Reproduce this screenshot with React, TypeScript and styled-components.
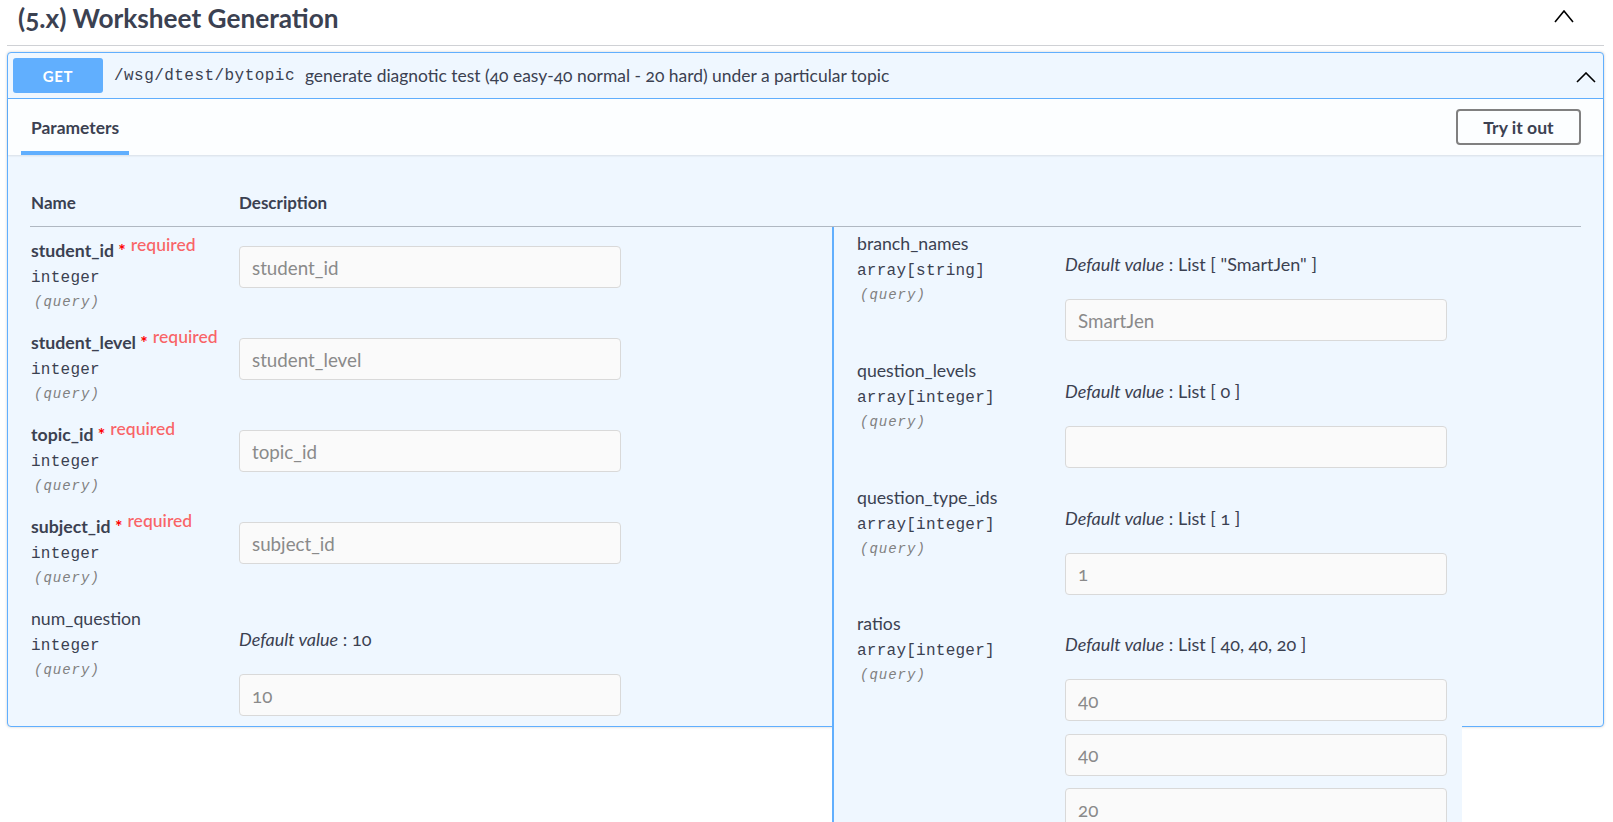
import React from 'react'
import styled, { createGlobalStyle } from 'styled-components'

const GlobalStyle = createGlobalStyle`
	html, body {
		margin: 0;
		padding: 0;
		background: #fff;
	}
	body {
		font-family: Lato, "Open Sans", sans-serif;
		font-variant-numeric: oldstyle-nums;
		color: #3b4151;
	}
	* {
		box-sizing: border-box;
	}
`

type Param = {
	name: string
	type: string
	required?: boolean
	def?: string
	values?: string[]
}

const leftParams: Param[] = [
	{ name: 'student_id', type: 'integer', required: true },
	{ name: 'student_level', type: 'integer', required: true },
	{ name: 'topic_id', type: 'integer', required: true },
	{ name: 'subject_id', type: 'integer', required: true },
	{ name: 'num_question', type: 'integer', def: '10', values: ['10'] },
]

const rightParams: Param[] = [
	{ name: 'branch_names', type: 'array[string]', def: 'List [ "SmartJen" ]', values: ['SmartJen'] },
	{ name: 'question_levels', type: 'array[integer]', def: 'List [ 0 ]', values: [''] },
	{ name: 'question_type_ids', type: 'array[integer]', def: 'List [ 1 ]', values: ['1'] },
	{ name: 'ratios', type: 'array[integer]', def: 'List [ 40, 40, 20 ]', values: ['40', '40', '20'] },
]

function Chevron({ width = 20, height = 12 }: { width?: number; height?: number }) {
	return (
		<svg width={width} height={height} viewBox={`0 0 ${width} ${height}`} fill='none'>
			<polyline
				points={`1,${height - 1} ${width / 2},1 ${width - 1},${height - 1}`}
				stroke='#000'
				strokeWidth='1.6'
				strokeLinejoin='miter'
			/>
		</svg>
	)
}

export default function App() {
	return (
		<>
			<GlobalStyle />
			<Page>
				<TagHeader>
					<TagTitle>(5.x) Worksheet Generation</TagTitle>
					<TagToggle>
						<Chevron width={20} height={13} />
					</TagToggle>
				</TagHeader>

				<Opblock>
					<Summary>
						<Method>GET</Method>
						<Path>/wsg/dtest/bytopic</Path>
						<SummaryText>
							generate diagnotic test (40 easy-40 normal - 20 hard) under a particular topic
						</SummaryText>
						<SummaryToggle>
							<Chevron width={20} height={11} />
						</SummaryToggle>
					</Summary>

					<TabHeader>
						<Tab>Parameters</Tab>
						<TryButton>Try it out</TryButton>
					</TabHeader>

					<TableWrap>
						<HeadRow>
							<HeadName>Name</HeadName>
							<HeadCell>Description</HeadCell>
						</HeadRow>
						<Body>
							<LeftColumn>
								{leftParams.map((p) => (
									<ParamRow key={p.name} param={p} />
								))}
							</LeftColumn>
							<RightColumn>
								{rightParams.map((p) => (
									<ParamRow key={p.name} param={p} $tight />
								))}
							</RightColumn>
						</Body>
					</TableWrap>
				</Opblock>
			</Page>
		</>
	)
}

function ParamRow({ param, $tight }: { param: Param; $tight?: boolean }) {
	return (
		<Row $tight={$tight}>
			<NameCell>
				<ParamName $required={param.required}>
					{param.name}
					{param.required && (
						<>
							<Star>&nbsp;*</Star>
							<Required>required</Required>
						</>
					)}
				</ParamName>
				<ParamType>{param.type}</ParamType>
				<ParamIn>(query)</ParamIn>
			</NameCell>
			<DescCell>
				{param.def !== undefined ? (
					<>
						<DefaultLine>
							<i>Default value</i> : {param.def}
						</DefaultLine>
						<InputStack>
							{param.values!.map((v, i) => (
								<Input key={i} placeholder={v} readOnly />
							))}
						</InputStack>
					</>
				) : (
					<InputStack $first>
						<Input placeholder={param.name} readOnly />
					</InputStack>
				)}
			</DescCell>
		</Row>
	)
}

const Page = styled.div`
	height: 100vh;
	overflow: hidden;
	padding: 0 9px 0 7px;
`

const TagHeader = styled.div`
	display: flex;
	align-items: flex-start;
	justify-content: space-between;
	height: 46px;
	padding: 0 30px 0 11px;
	border-bottom: 1px solid #cfd1d5;
`

const TagTitle = styled.h3`
	margin: 0;
	font-size: 26.2px;
	line-height: 37px;
	font-weight: 700;
	color: #3b4151;
`

const TagToggle = styled.div`
	padding-top: 10px;
	line-height: 0;
`

const Opblock = styled.div`
	margin-top: 6px;
	height: 675px;
	border: 1px solid #61affe;
	border-radius: 4px;
	background: #eff7ff;
	box-shadow: 0 0 3px rgba(0, 0, 0, 0.19);
`

const Summary = styled.div`
	display: flex;
	align-items: center;
	height: 46px;
	padding: 0 7px 0 5px;
	border-bottom: 1px solid #61affe;
`

const Method = styled.div`
	width: 90px;
	height: 35px;
	border-radius: 3px;
	background: #61affe;
	color: #fff;
	font-weight: 700;
	font-size: 15px;
	letter-spacing: 0.6px;
	display: flex;
	align-items: center;
	justify-content: center;
`

const Path = styled.span`
	margin-left: 11px;
	font-family: "Liberation Mono", monospace;
	font-size: 16px;
	letter-spacing: 0.45px;
	color: #3b4151;
`

const SummaryText = styled.span`
	margin-left: 10px;
	font-size: 17.45px;
	color: #3b4151;
`

const SummaryToggle = styled.div`
	margin-left: auto;
	margin-top: 3px;
	line-height: 0;
`

const TabHeader = styled.div`
	display: flex;
	align-items: center;
	justify-content: space-between;
	height: 56px;
	padding: 0 22px 0 13px;
	background: rgba(255, 255, 255, 0.8);
	box-shadow: 0 1px 2px rgba(0, 0, 0, 0.1);
`

const Tab = styled.div`
	position: relative;
	align-self: stretch;
	display: flex;
	align-items: center;
	padding: 0 10px;
	font-size: 17.4px;
	font-weight: 700;

	&::after {
		content: '';
		position: absolute;
		left: 0;
		right: 0;
		bottom: 0;
		height: 4px;
		background: #61affe;
	}
`

const TryButton = styled.button`
	width: 125px;
	height: 36px;
	border: 2px solid #808080;
	border-radius: 4px;
	background: transparent;
	font-family: inherit;
	font-size: 17.6px;
	font-weight: 700;
	color: #3b4151;
	cursor: pointer;
`

const TableWrap = styled.div`
	padding: 37px 22px 0;
`

const HeadRow = styled.div`
	display: flex;
	padding-bottom: 12px;
	border-bottom: 1px solid rgba(59, 65, 81, 0.35);
	font-size: 17px;
	font-weight: 700;
	line-height: 22px;
`

const HeadName = styled.div`
	width: 209px;
	padding-left: 1px;
`

const HeadCell = styled.div``

const Body = styled.div`
	display: flex;
	align-items: flex-start;
`

const LeftColumn = styled.div`
	width: 802px;
`

const RightColumn = styled.div`
	width: 630px;
	border-left: 2px solid #61affe;
	background: #eff7ff;
	padding-left: 22px;
`

const Row = styled.div<{ $tight?: boolean }>`
	display: flex;
	padding: ${(p) => (p.$tight ? '5px 0 12.8px' : '12px 0 8px')};
`

const NameCell = styled.div`
	width: 209px;
	flex-shrink: 0;
	padding-left: 1px;
`

const ParamName = styled.div<{ $required?: boolean }>`
	font-size: 17.7px;
	line-height: 24px;
	font-weight: ${(p) => (p.$required ? 700 : 400)};
	white-space: nowrap;
`

const Star = styled.span`
	color: #f00;
`

const Required = styled.span`
	position: relative;
	top: -6px;
	padding-left: 5px;
	font-size: 17.5px;
	font-weight: 600;
	color: rgba(255, 0, 0, 0.6);
`

const ParamType = styled.div`
	font-family: "Liberation Mono", monospace;
	font-size: 16px;
	letter-spacing: 0.25px;
	line-height: 30px;
`

const ParamIn = styled.div`
	padding-left: 3px;
	font-family: "Liberation Mono", monospace;
	font-size: 14px;
	font-style: italic;
	letter-spacing: 1px;
	line-height: 18px;
	color: #808080;
`

const DescCell = styled.div`
	flex: 1;
`

const DefaultLine = styled.div`
	margin-top: 21px;
	font-size: 18px;
	line-height: 22px;
`

const InputStack = styled.div<{ $first?: boolean }>`
	display: flex;
	flex-direction: column;
	gap: 12.5px;
	margin-top: ${(p) => (p.$first ? '7px' : '24px')};
`

const Input = styled.input`
	width: 382px;
	height: 42px;
	padding: 0 12px;
	border: 1px solid #d9d9d9;
	border-radius: 4px;
	background: #fafafa;
	font-family: inherit;
	font-size: 18.8px;
	font-variant-numeric: oldstyle-nums;
	color: #3b4151;
	outline: none;

	&::placeholder {
		color: #8a8a8a;
	}
`
